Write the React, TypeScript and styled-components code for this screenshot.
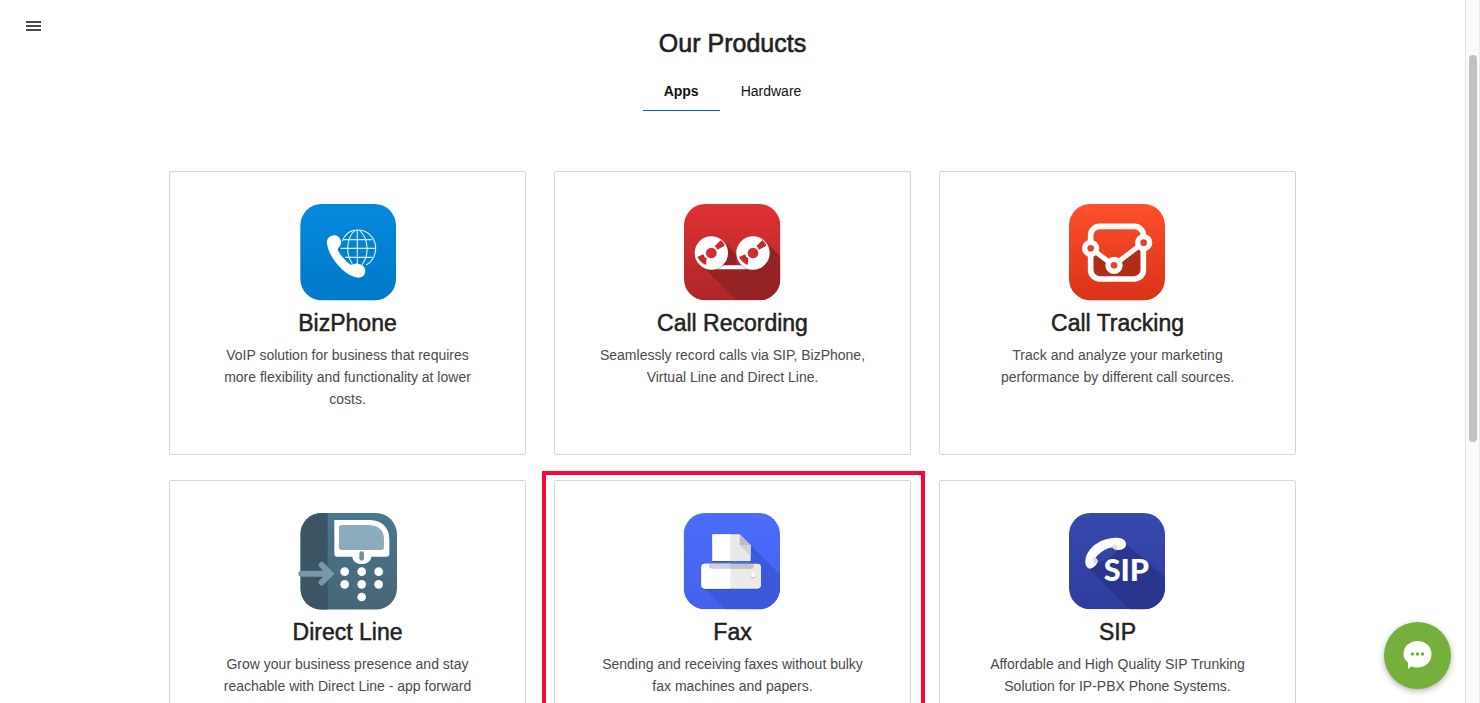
import React, { useState } from "react";
import styled, { createGlobalStyle } from "styled-components";

const GlobalStyle = createGlobalStyle`
  *, *::before, *::after { box-sizing: border-box; }
  body {
    margin: 0;
    background: #fff;
    color: #222;
    font-family: "Liberation Sans", Arial, sans-serif;
    font-size: 14px;
    line-height: 22px;
  }
`;

const Shell = styled.div`
  display: grid;
  grid-template-columns: minmax(0, 1fr) 15px;
  height: 100vh;
`;

const Page = styled.div`
  position: relative;
  overflow-y: auto;
  scrollbar-width: none;
`;

const ScrollTrack = styled.div`
  display: grid;
  grid-template-rows: 55px 55% 1fr;
  padding: 0 2px 0 3px;
  background: #fafafa;
  border-left: 1px solid #e4e4e4;
  border-right: 1px solid #ececec;
`;

const ScrollThumb = styled.div`
  grid-row: 2;
  border-radius: 4px;
  background: #c1c1c1;
`;

const MenuButton = styled.button`
  position: absolute;
  top: 16px;
  left: 21px;
  display: grid;
  place-items: center;
  width: 25px;
  height: 20px;
  padding: 0;
  border: 0;
  background: none;
  cursor: pointer;
`;

const Products = styled.main`
  display: flex;
  flex-direction: column;
  align-items: center;
  padding: 27px 24px 40px;
`;

const Heading = styled.h1`
  margin: 0;
  font-size: 25px;
  font-weight: 400;
  line-height: 32px;
  color: #222;
  -webkit-text-stroke: 0.6px #222;
`;

const Tabs = styled.div`
  display: flex;
  margin: 13px 0 60px;
`;

const Tab = styled.button<{ $active: boolean }>`
  height: 39px;
  padding: 0 21px;
  border: 0;
  border-bottom: 1px solid ${(p) => (p.$active ? "#0069c0" : "transparent")};
  background: none;
  color: #111;
  font-family: inherit;
  font-size: 14px;
  font-weight: ${(p) => (p.$active ? 700 : 400)};
  cursor: pointer;
`;

const Grid = styled.div`
  display: grid;
  grid-template-columns: repeat(3, minmax(0, 1fr));
  gap: 25px 28px;
  width: 100%;
  max-width: 1127px;
`;

const Card = styled.article<{ $highlighted?: boolean }>`
  position: relative;
  display: flex;
  flex-direction: column;
  align-items: center;
  min-height: 284px;
  padding: 32px 40px;
  border: 1px solid #d8d8d8;
  border-radius: 2px;
  text-align: center;

  &::after {
    content: "";
    display: ${(p) => (p.$highlighted ? "block" : "none")};
    position: absolute;
    inset: -10px -15px -10px -13px;
    border: 4px solid #ff0535;
    pointer-events: none;
  }
`;

const Icon = styled.svg`
  display: block;
  width: 97px;
  height: 97px;
  overflow: visible;
`;

const CardTitle = styled.h2`
  margin: 7px 0 6px;
  font-size: 23px;
  font-weight: 400;
  line-height: 30px;
  color: #222;
  -webkit-text-stroke: 0.5px #222;
`;

const CardText = styled.p`
  margin: 0;
  color: #4a4a4a;
`;

const ChatButton = styled.button`
  position: fixed;
  right: 29px;
  bottom: 14px;
  display: grid;
  place-items: center;
  width: 67px;
  height: 67px;
  padding: 0;
  border: 0;
  border-radius: 50%;
  background: #74b03b;
  box-shadow: 0 2px 6px rgba(0, 0, 0, 0.3);
  cursor: pointer;
`;

function Gradient({ id, from, to }: { id: string; from: string; to: string }) {
  return (
    <linearGradient id={id} x1="0" y1="0" x2="0" y2="1">
      <stop offset="0" stopColor={from} />
      <stop offset="1" stopColor={to} />
    </linearGradient>
  );
}

function BizPhoneIcon() {
  return (
    <Icon viewBox="27 27 291 291" aria-hidden="true">
      <defs><Gradient id="biz" from="#0589dd" to="#0079c8" /></defs>
      <rect x="31" y="27" width="287" height="289" rx="64" fill="url(#biz)" />
      <g fill="none" stroke="#d9effc" strokeWidth="3.4">
        <path d="M157 139C164 118 181 105 203 105C234 105 257 129 257 160C257 181 246 201 228 210" />
        <path d="M202 105V209M152 160H257M161 134H245M165 187H247" />
        <path d="M195 106C168 128 167 181 187 206M209 106C237 132 237 180 217 209" />
      </g>
      <path d="M111 145C110 131 119 121 133 121C145 121 154 132 153 145C152 153 147 157 143 161C143 173 170 202 182 209C188 209 194 205 203 206C216 207 226 215 226 228C225 241 217 248 205 248C187 247 169 235 152 219C130 197 113 168 111 145Z" fill="#fff" />
    </Icon>
  );
}

function Reel({ cx }: { cx: number }) {
  return (
    <g transform={`translate(${cx} 174)`}>
      <circle cy="3" r="50" fill="#7d1c1d" opacity="0.35" />
      <circle r="50" fill="#fff" />
      <circle r="16" fill="#d02f32" />
      <path d="M10 -20L28 -38Q37 -32 40 -22L18 -10Q15 -17 10 -20Z" fill="#c52c2f" />
      <path d="M-14 16L-16 36Q-32 30 -42 12L-24 4Q-22 12 -14 16Z" fill="#c52c2f" />
    </g>
  );
}

function RecordingIcon() {
  return (
    <Icon viewBox="30 27 291 291" aria-hidden="true">
      <defs>
        <Gradient id="rec" from="#e03133" to="#ad2628" />
        <clipPath id="recClip"><rect x="30" y="27" width="289" height="289" rx="64" /></clipPath>
      </defs>
      <g clipPath="url(#recClip)">
        <rect x="30" y="27" width="289" height="289" fill="url(#rec)" />
        <path d="M78 208L188 316H319V185L272 138L237 222H188V180L147 138Z" fill="#952323" />
      </g>
      <path d="M112 217H237" stroke="#fff" strokeWidth="12" />
      <Reel cx={112} />
      <Reel cx={237} />
    </Icon>
  );
}

function TrackingIcon() {
  return (
    <Icon viewBox="33 27 291 291" aria-hidden="true">
      <defs><Gradient id="track" from="#ff4f2c" to="#d83316" /></defs>
      <rect x="33" y="27" width="288" height="289" rx="64" fill="url(#track)" />
      <path d="M98 163L168 212L256 147V222Q256 251 230 251H123Q98 251 98 222Z" fill="#b02d16" />
      <rect x="98" y="94" width="158" height="158" rx="27" fill="none" stroke="#fff" strokeWidth="17" />
      <path d="M98 160L167 211L256 143" fill="none" stroke="#fff" strokeWidth="15" />
      <g fill="#e84224" stroke="#fff" strokeWidth="16">
        <circle cx="98" cy="160" r="18" />
        <circle cx="168" cy="211" r="18" />
        <circle cx="257" cy="143" r="18" />
      </g>
    </Icon>
  );
}

function DirectLineIcon() {
  return (
    <Icon viewBox="27 27 291 291" aria-hidden="true">
      <defs>
        <Gradient id="direct" from="#4b778d" to="#476577" />
        <clipPath id="directClip"><rect x="31" y="27" width="290" height="290" rx="64" /></clipPath>
      </defs>
      <g clipPath="url(#directClip)">
        <rect x="31" y="27" width="290" height="290" fill="url(#direct)" />
        <rect x="31" y="27" width="82" height="290" fill="#3c5564" />
      </g>
      <path d="M133 48H241C276 49 298 72 298 104V151Q298 158 291 158H244C243 171 231 180 215 180C199 180 188 171 187 158H140Q133 158 133 151Z" fill="#fff" />
      <path d="M155 63H238C266 65 282 80 282 105V130Q282 138 274 138H155Q147 138 147 130V71Q147 63 155 63Z" fill="#8cacbe" />
      <rect x="208" y="142" width="14" height="28" rx="7" fill="#718f9f" />
      <g fill="#fff">
        {[164, 215, 266].map((x) => <circle key={x} cx={x} cy="203" r="13" />)}
        {[164, 215, 266].map((x) => <circle key={x} cx={x} cy="241" r="13" />)}
        <circle cx="215" cy="279" r="13" />
      </g>
      <path d="M34 209H118M95 183L121 209L95 235" fill="none" stroke="#7898a8" strokeWidth="18" strokeLinecap="round" strokeLinejoin="miter" />
    </Icon>
  );
}

function FaxIcon() {
  return (
    <Icon viewBox="30 27 291 291" aria-hidden="true">
      <defs>
        <Gradient id="fax" from="#4b6dfc" to="#4361ec" />
        <clipPath id="faxClip"><rect x="29" y="27" width="289" height="289" rx="64" /></clipPath>
      </defs>
      <g clipPath="url(#faxClip)">
        <rect x="29" y="27" width="289" height="289" fill="url(#fax)" />
        <path d="M85 248L155 317H318V212L229 122V180Z" fill="#3c58db" />
      </g>
      <path d="M115 94H171V174H115Z" fill="#3653c8" />
      <path d="M115 91H197L230 124V171H115Z" fill="#e9e9e9" />
      <path d="M115 91H169V171H115Z" fill="#fff" />
      <path d="M197 124L230 156V124Z" fill="#d2d2d2" />
      <path d="M197 91V124H230Z" fill="#bdbdbd" />
      <rect x="82" y="182" width="179" height="75" rx="10" fill="#304dbd" />
      <rect x="82" y="179" width="179" height="75" rx="10" fill="#ebebeb" />
      <path d="M169 179V254H92Q82 254 82 244V189Q82 179 92 179Z" fill="#fff" />
      <path d="M105 180H239V186Q239 194 230 194H115Q105 194 105 186Z" fill="#d0d0d0" />
      <path d="M169 180H239V186Q239 194 230 194H169Z" fill="#c3c3c3" />
      <circle cx="237" cy="216" r="8" fill="#c8c8c8" />
      <circle cx="237" cy="213" r="7" fill="#fff" />
    </Icon>
  );
}

function SipIcon() {
  return (
    <Icon viewBox="33 27 291 291" aria-hidden="true">
      <defs>
        <Gradient id="sip" from="#3849ae" to="#2e3c9d" />
        <clipPath id="sipClip"><rect x="33" y="27" width="288" height="289" rx="64" /></clipPath>
      </defs>
      <g clipPath="url(#sipClip)">
        <rect x="33" y="27" width="288" height="289" fill="url(#sip)" />
        <path d="M88 189L216 317H321V218L203 120L150 165Z" fill="#2a368e" />
      </g>
      <path d="M82 174C81 155 94 133 115 119C137 105 164 99 183 102C197 104 205 112 204 122C203 133 192 138 181 138C173 138 167 136 163 130C145 132 124 147 112 162C117 164 119 168 119 172C117 182 107 193 96 194C87 193 82 184 82 174Z" fill="#fff" />
      <path d="M163 126C168 121 174 122 179 126L174 138C168 136 164 133 163 126ZM108 158L120 172L110 181C105 173 104 165 108 158Z" fill="#dedede" />
      <text x="205" y="232" textAnchor="middle" fill="#fff" fontFamily="Lato, sans-serif" fontWeight="900" fontSize="92">SIP</text>
    </Icon>
  );
}

const products = [
  { name: "BizPhone", Art: BizPhoneIcon, text: "VoIP solution for business that requires more flexibility and functionality at lower costs." },
  { name: "Call Recording", Art: RecordingIcon, text: "Seamlessly record calls via SIP, BizPhone, Virtual Line and Direct Line." },
  { name: "Call Tracking", Art: TrackingIcon, text: "Track and analyze your marketing performance by different call sources." },
  { name: "Direct Line", Art: DirectLineIcon, text: "Grow your business presence and stay reachable with Direct Line - app forward" },
  { name: "Fax", Art: FaxIcon, text: "Sending and receiving faxes without bulky fax machines and papers.", highlighted: true },
  { name: "SIP", Art: SipIcon, text: "Affordable and High Quality SIP Trunking Solution for IP-PBX Phone Systems." },
];

const tabs = ["Apps", "Hardware"];

export default function App() {
  const [active, setActive] = useState("Apps");
  return (
    <Shell>
      <GlobalStyle />
      <Page>
        <MenuButton type="button" aria-label="Menu">
          <svg width="15" height="10" viewBox="0 0 15 10" fill="#48494b" aria-hidden="true">
            <path d="M0 0H15V2H0ZM0 4H15V6H0ZM0 8H15V10H0Z" />
          </svg>
        </MenuButton>
        <Products>
          <Heading>Our Products</Heading>
          <Tabs role="tablist">
            {tabs.map((tab) => (
              <Tab key={tab} type="button" role="tab" aria-selected={tab === active} $active={tab === active} onClick={() => setActive(tab)}>
                {tab}
              </Tab>
            ))}
          </Tabs>
          <Grid>
            {products.map(({ name, Art, text, highlighted }) => (
              <Card key={name} $highlighted={highlighted}>
                <Art />
                <CardTitle>{name}</CardTitle>
                <CardText>{text}</CardText>
              </Card>
            ))}
          </Grid>
        </Products>
      </Page>
      <ScrollTrack aria-hidden="true">
        <ScrollThumb />
      </ScrollTrack>
      <ChatButton type="button" aria-label="Open chat">
        <svg width="31" height="31" viewBox="0 0 31 31" aria-hidden="true">
          <path d="M15.5 1C23.5 1 29.5 6.500 29.500 14C29.500 22 23.500 27.500 15.500 27.500C13 27.500 11 27 9.500 26.500L6 29V22.500C3 20.500 1.500 17.500 1.500 14C1.500 6.500 7.500 1 15.500 1Z" fill="#fff" />
          <g fill="#74b03b">
            <circle cx="10.500" cy="14" r="1.700" />
            <circle cx="15.500" cy="14" r="1.700" />
            <circle cx="20.500" cy="14" r="1.700" />
          </g>
        </svg>
      </ChatButton>
    </Shell>
  );
}
